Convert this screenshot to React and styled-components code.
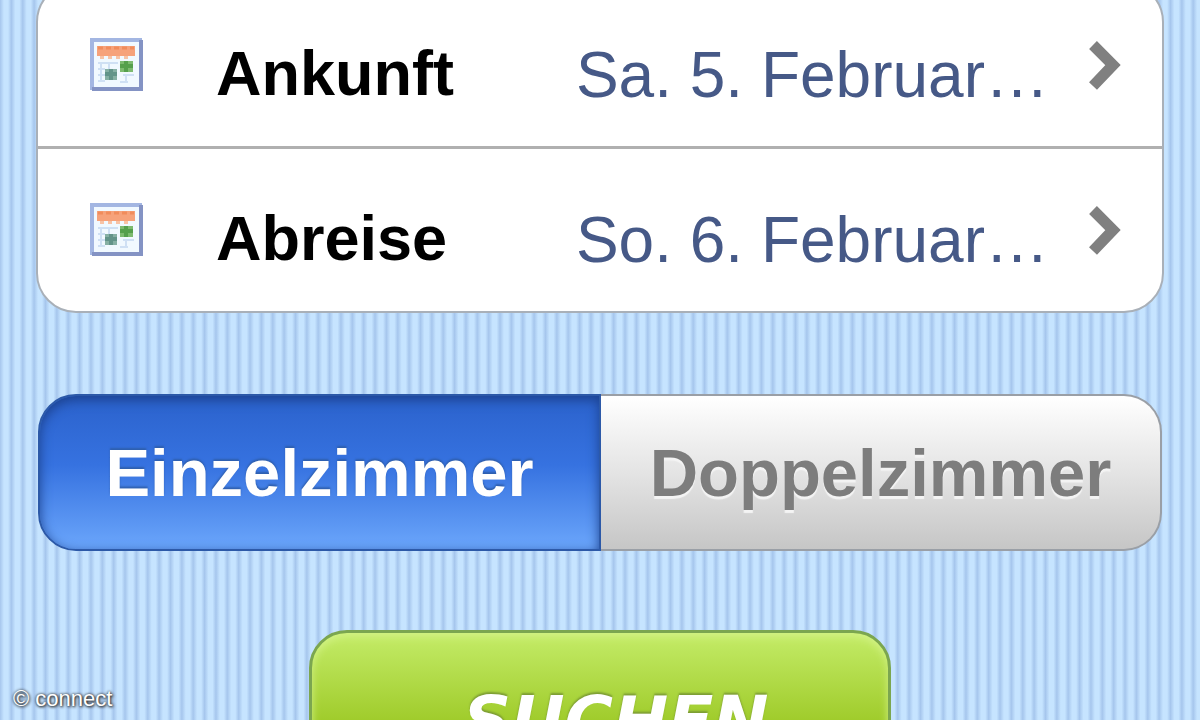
import React, { useState } from "react";
import styled, { createGlobalStyle } from "styled-components";

const dates = [
  { id: "arrival", label: "Ankunft", value: "Sa. 5. Februar…" },
  { id: "departure", label: "Abreise", value: "So. 6. Februar…" },
];

const rooms = [
  { id: "single", label: "Einzelzimmer" },
  { id: "double", label: "Doppelzimmer" },
];

function CalendarIcon() {
  return (
    <IconBox viewBox="0 0 54 54" aria-hidden="true">
      <rect x="2" y="2" width="50" height="50" fill="#f1f9ff" />
      <path d="M2 52V2H52" fill="none" stroke="#a3b6e2" strokeWidth="4" />
      <path d="M51 2V51H2" fill="none" stroke="#8493c4" strokeWidth="4" />
      <rect x="7" y="8" width="38" height="10" fill="#f6a27a" />
      <path d="M8 10h36" stroke="#f08c5c" strokeWidth="3" strokeDasharray="5 3" />
      <path d="M12 18v3M20 18v3M28 18v3M36 18v3" stroke="#f7c3a6" strokeWidth="4" />
      <path
        d="M8 25h20M8 31h7M8 37h7M8 43h7M11 24v20M19 24v7M33 37h11M30 44h8M36 36v8"
        stroke="#cfe0f4"
        strokeWidth="2"
      />
      <rect x="30" y="23" width="13" height="11" fill="#7dbb70" />
      <rect x="15" y="31" width="12" height="11" fill="#86b0a4" />
      <path d="M21 31v11M15 36h12" stroke="#639489" strokeWidth="4" />
      <path d="M36 23v11M30 28h13" stroke="#55a04c" strokeWidth="4" />
    </IconBox>
  );
}

function Chevron() {
  return (
    <ChevronBox viewBox="0 0 32 50" aria-hidden="true">
      <path d="M4 5L24 25L4 46" fill="none" stroke="#808080" strokeWidth="11" />
    </ChevronBox>
  );
}

function App() {
  const [room, setRoom] = useState("single");

  return (
    <Page>
      <GlobalStyle />
      <DateList>
        {dates.map((item) => (
          <DateItem key={item.id}>
            <DateLink href={`#${item.id}`}>
              <CalendarIcon />
              <DateLabel>{item.label}</DateLabel>
              <DateValue>{item.value}</DateValue>
              <Chevron />
            </DateLink>
          </DateItem>
        ))}
      </DateList>
      <Segments>
        {rooms.map((item) => (
          <Segment
            key={item.id}
            type="button"
            aria-pressed={room === item.id}
            $active={room === item.id}
            onClick={() => setRoom(item.id)}
          >
            {item.label}
          </Segment>
        ))}
      </Segments>
      <SearchButton type="button">SUCHEN</SearchButton>
      <Credit>© connect</Credit>
    </Page>
  );
}

const GlobalStyle = createGlobalStyle`
  * {
    box-sizing: border-box;
  }
  body {
    margin: 0;
    font-family: "Liberation Sans", Arial, sans-serif;
  }
`;
const Page = styled.main`
  position: relative;
  height: 100vh;
  padding: 0 36px;
  overflow: hidden;
  display: flex;
  flex-direction: column;
  background: repeating-linear-gradient(
    90deg,
    #a6c6ed 0,
    #c6e4ff 4px,
    #c6e4ff 8px,
    #a6c6ed calc(100% / 105.6)
  );
`;
const DateList = styled.ul`
  flex: none;
  margin: -18px 0 0;
  padding: 0;
  list-style: none;
  background: #fff;
  border: 2px solid #a9b0b8;
  border-radius: 40px;
`;
const DateItem = styled.li`
  & + & {
    border-top: 3px solid #b0b0b0;
  }
`;
const DateLink = styled.a`
  display: flex;
  align-items: center;
  height: 162px;
  padding: 0 41px 0 52px;
  color: inherit;
  text-decoration: none;
`;
const IconBox = styled.svg`
  flex: none;
  width: 54px;
  height: 54px;
  margin-right: 72px;
`;
const ChevronBox = styled.svg`
  flex: none;
  width: 32px;
  height: 50px;
  margin-left: 40px;
`;
const DateLabel = styled.span`
  flex: 1;
  padding-top: 16px;
  font-size: 63px;
  line-height: 72px;
  font-weight: bold;
  color: #000;
`;
const DateValue = styled.span`
  padding-top: 20px;
  font-size: 64px;
  line-height: 72px;
  color: #465987;
`;
const Segments = styled.div`
  flex: none;
  display: flex;
  height: 157px;
  margin: 81px 2px 0;
`;
const Segment = styled.button`
  flex: 1 1 auto;
  padding: 0;
  border: 2px solid ${(props) => (props.$active ? "#2c59a8" : "#9a9fa6")};
  font-family: inherit;
  font-size: 67px;
  font-weight: bold;
  color: ${(props) => (props.$active ? "#fff" : "#7d7d7d")};
  text-shadow: ${(props) =>
    props.$active ? "0 -2px 2px #2f5fae" : "0 3px 1px #f4f4f4"};
  background: ${(props) =>
    props.$active
      ? "linear-gradient(#2b62cc, #3672e0 45%, #6ba6fb)"
      : "linear-gradient(#fff, #e4e4e4 50%, #c6c6c6)"};
  box-shadow: ${(props) =>
    props.$active ? "inset 0 4px 12px #1c428f" : "none"};

  &:first-child {
    flex-basis: 4px;
    border-radius: 38px 0 0 38px;
  }
  &:last-child {
    flex-basis: 0;
    border-left: 0;
    border-radius: 0 38px 38px 0;
  }
`;
const SearchButton = styled.button`
  flex: none;
  align-self: center;
  min-width: 582px;
  height: 180px;
  margin-top: 79px;
  padding: 0 0 0 32px;
  border: 3px solid #7ba650;
  border-radius: 38px;
  font-family: "DejaVu Sans", Verdana, sans-serif;
  font-size: 66px;
  font-weight: bold;
  font-style: italic;
  color: #fff;
  text-shadow: 0 -2px 2px #7c9c34;
  background: linear-gradient(#c4ec68, #a0cc2c 50%, #90c020);
  box-shadow: inset 0 3px 8px #d3f288;
`;
const Credit = styled.small`
  position: absolute;
  left: 13px;
  bottom: 8px;
  font-size: 22px;
  line-height: 26px;
  color: #fff;
  text-shadow: 0 0 3px #222, 1px 1px 3px #222;
`;

export default App;
